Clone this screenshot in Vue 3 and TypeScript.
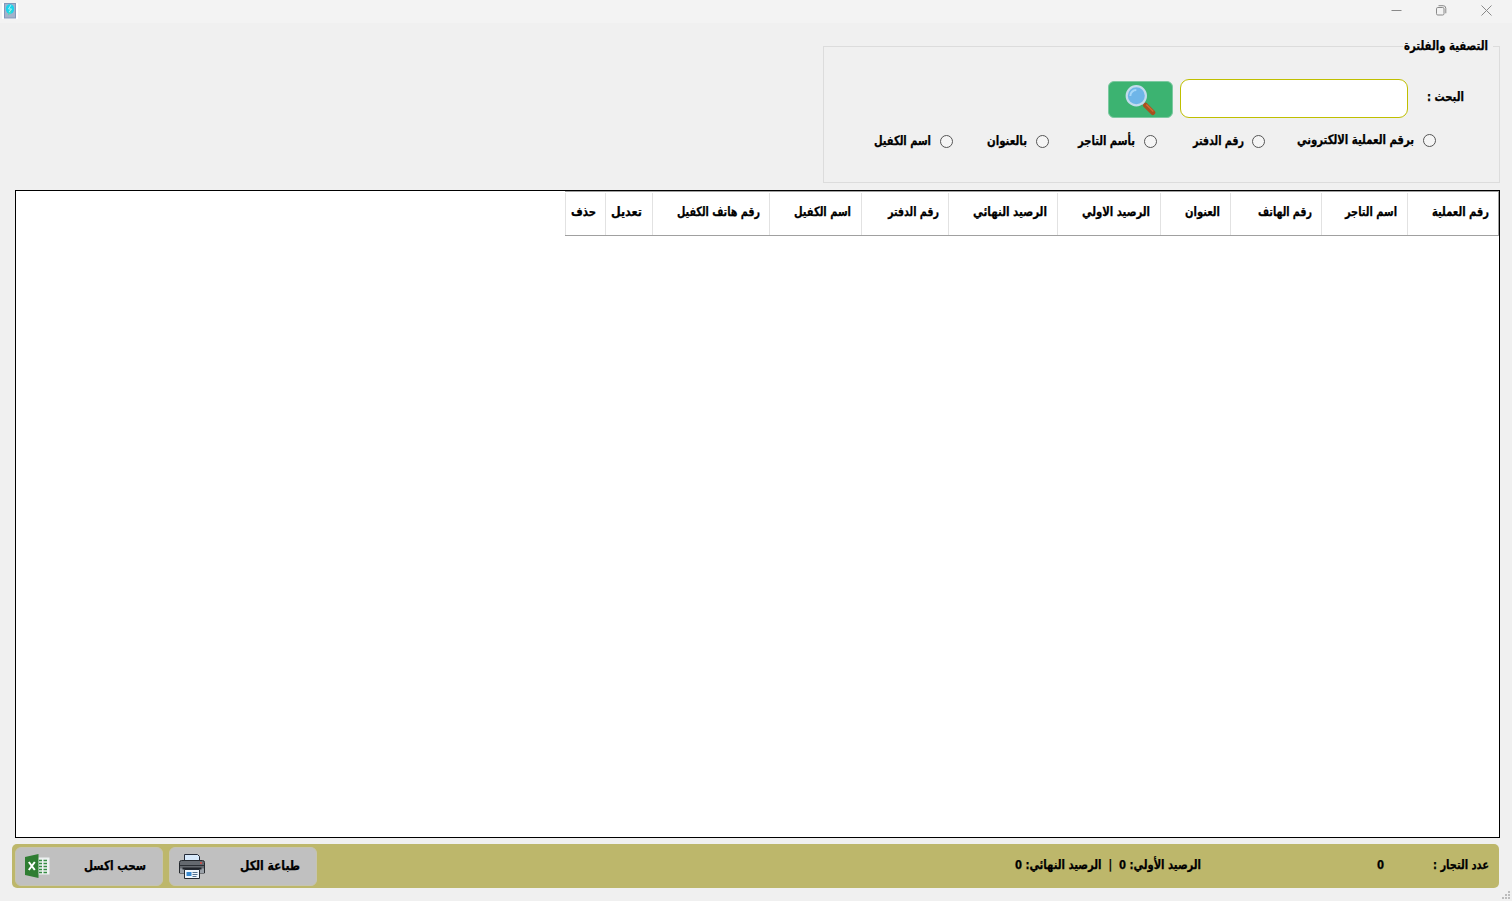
<script setup lang="ts">
import { h, ref } from 'vue'

interface LabelProps { text: string; w: number }

// A caption fitted to a fixed width; its baseline lies 14px below its top.
const Caption = (p: LabelProps) =>
  h('svg', { class: 'caption', width: p.w, height: 20 }, [
    h('text', { x: p.w / 2, y: 14, textLength: p.w, lengthAdjust: 'spacingAndGlyphs' }, p.text),
  ])
Caption.props = ['text', 'w']

const query = ref('')
const filters = [
  { text: 'برقم العملية الالكتروني', w: 117, gap: 0, lift: true },
  { text: 'رقم الدفتر', w: 51, gap: 32, tight: true },
  { text: 'بأسم التاجر', w: 57, gap: 36 },
  { text: 'بالعنوان', w: 40, gap: 29 },
  { text: 'اسم الكفيل', w: 57, gap: 34 },
]
const columns = [
  { text: 'رقم العملية', w: 57, col: 91, pad: 9 },
  { text: 'اسم التاجر', w: 52, col: 86, pad: 10 },
  { text: 'رقم الهاتف', w: 54, col: 91, pad: 9 },
  { text: 'العنوان', w: 35, col: 70, pad: 10 },
  { text: 'الرصيد الاولي', w: 68, col: 103, pad: 10 },
  { text: 'الرصيد النهائي', w: 74, col: 109, pad: 10 },
  { text: 'رقم الدفتر', w: 51, col: 87, pad: 9 },
  { text: 'اسم الكفيل', w: 57, col: 92, pad: 10 },
  { text: 'رقم هاتف الكفيل', w: 83, col: 117, pad: 9 },
  { text: 'تعديل', w: 31, col: 47, pad: 10 },
  { text: 'حذف', w: 25, col: 40, pad: 9 },
]
</script>

<template>
  <div class="window">
    <header class="titlebar">
      <svg class="app-icon" width="16" height="16" viewBox="0 0 16 16">
        <rect width="16" height="16" fill="#fff" />
        <rect x="2.5" y=".5" width="11" height="14.5" fill="#a3b3cb" stroke="#8298bb" />
        <ellipse cx="8" cy="6" rx="4.2" ry="4.8" fill="#19d4ee" />
        <path d="M10 4.5 9 10 6 12.5 7 8.5z" fill="#4be0b8" />
        <path d="M9 2 6.5 6h3L7 9" fill="none" stroke="#a5f4fb" />
      </svg>
      <div class="controls">
        <svg width="11" height="11" viewBox="0 0 11 11"><path d="M.5 5.5h10" /></svg>
        <svg width="11" height="11" viewBox="0 0 11 11">
          <rect x=".5" y="2.5" width="7.5" height="7.5" rx="1.3" />
          <path d="M2.5 .7h4.7a2.6 2.6 0 0 1 2.6 2.6v5" />
        </svg>
        <svg width="11" height="11" viewBox="0 0 11 11"><path d="m.5.5 10 10m0-10-10 10" /></svg>
      </div>
    </header>

    <fieldset class="filter">
      <legend><Caption text="التصفية والفلترة" :w="84" /></legend>
      <div class="search-row">
        <Caption class="search-label" text="البحث :" :w="37" />
        <input v-model="query" class="search-input" type="text" />
        <button class="search-button">
          <svg width="32" height="32" viewBox="0 0 32 32">
            <path d="m19 19 3 3" stroke="#a9c3d0" stroke-width="3" />
            <path d="m21.5 21.2 7.3 7.3" stroke="#a8501f" stroke-width="5" stroke-linecap="round" />
            <path d="m22.3 20.5 7 7" stroke="#cf6d34" stroke-width="1.4" />
            <circle cx="12.3" cy="11.8" r="9.6" fill="#6eb5e8" stroke="#c3dbed" stroke-width="2.2" />
            <path d="M6.3 12a6 6 0 0 1 6-6" fill="none" stroke="#a5d6f8" stroke-width="2" />
          </svg>
        </button>
      </div>
      <div class="radio-row">
        <label
          v-for="f in filters"
          :key="f.text"
          class="radio"
          :class="{ lift: f.lift, tight: f.tight }"
          :style="{ marginRight: f.gap + 'px' }"
        >
          <span class="dot"></span>
          <Caption :text="f.text" :w="f.w" />
        </label>
      </div>
    </fieldset>

    <main class="grid">
      <div class="grid-head">
        <div
          v-for="c in columns"
          :key="c.text"
          class="cell"
          :style="{ width: c.col + 'px', paddingRight: c.pad + 'px' }"
        >
          <Caption :text="c.text" :w="c.w" />
        </div>
      </div>
    </main>

    <footer class="bar">
      <Caption text="عدد التجار :" :w="56" />
      <Caption class="count" text="0" :w="7" />
      <Caption class="totals" text="الرصيد الأولي: 0 &nbsp;|&nbsp; الرصيد النهائي: 0" :w="186" />
      <div class="actions">
        <button class="action print">
          <Caption text="طباعة الكل" :w="60" />
          <svg width="26" height="26" viewBox="0 0 26 26">
            <path d="M5.5 8V1.5h13l2 2V8z" fill="#d7e9fb" stroke="#242b38" />
            <path d="M2.5 7.5h21a2 2 0 0 1 2 2V20h-25V9.5a2 2 0 0 1 2-2z" fill="#64696f" stroke="#25292e" />
            <path d="M1 12.5h24" stroke="#2b2f35" />
            <path d="M1 15.5h24V20H1z" fill="#9ba1a8" />
            <path d="M21 10h2" stroke="#e04b43" stroke-width="1.5" />
            <path d="M3.5 15.5h19" stroke="#20242a" stroke-width="2" />
            <path d="M5.5 16.5h15v9h-15z" fill="#eff6fc" stroke="#252a32" />
            <path d="M7.5 19h5v4h-5z" fill="#3989cf" />
            <path d="M13.5 19.5h5m-5 2h5m-5 2h4" stroke="#53718f" />
          </svg>
        </button>
        <button class="action excel">
          <Caption text="سحب اكسل" :w="62" />
          <svg width="26" height="26" viewBox="0 0 26 26">
            <path d="M13 4.5h12.5v17H13z" fill="#eef2f2" />
            <path d="M15 7.5h3m1.5 0H23m-8 3h3m1.5 0H23m-8 3h3m1.5 0H23m-8 3h3m1.5 0H23m-8 3h3m1.5 0H23" stroke="#348b42" stroke-width="1.7" />
            <path d="M1 4 14.5 1v24L1 22z" fill="#2f7d32" />
            <path d="m4.8 9 6 8m0-8-6 8" stroke="#fff" stroke-width="2" />
          </svg>
        </button>
      </div>
    </footer>
    <svg class="grip" width="9" height="9" viewBox="0 0 9 9">
      <path d="M6 0h2v2H6zM3 3h2v2H3zM6 3h2v2H6zM0 6h2v2H0zM3 6h2v2H3zM6 6h2v2H6z" fill="#bcbcbc" />
    </svg>
  </div>
</template>

<style>
body { margin: 0; overflow: hidden; }
</style>

<style scoped>
.window {
  position: relative;
  box-sizing: border-box;
  width: 1512px;
  height: 901px;
  overflow: hidden;
  background: #f0f0f0;
  direction: rtl;
  font: bold 13px "DejaVu Sans Condensed", "DejaVu Sans", sans-serif;
  color: #000;
}
.caption {
  display: block;
  flex: none;
  overflow: visible;
  fill: currentColor;
  stroke: currentColor;
  stroke-width: 0.25px;
  text-anchor: middle;
  direction: rtl;
}
.titlebar {
  display: flex;
  direction: ltr;
  justify-content: space-between;
  height: 23px;
  background: #f3f3f3;
}
.app-icon { margin: 3px 0 0 2px; }
.controls { display: flex; gap: 34px; margin: 5px 20px 0 0; }
.controls svg { fill: none; stroke: #898989; stroke-width: 1; }
.filter {
  box-sizing: border-box;
  width: 677px;
  height: 147px;
  margin: 13px 12px 0 0;
  padding: 0;
  border: 1px solid #dcdcdc;
  min-width: 0;
}
.filter legend { height: 20px; margin-right: 6px; padding: 0 5px 0 1px; }
.search-row { display: flex; align-items: flex-start; margin: 23px 35px 0 0; height: 39px; }
.search-label { margin-top: 8px; }
.search-input {
  box-sizing: border-box;
  width: 228px;
  height: 39px;
  margin: 0 19px 0 0;
  padding: 0 10px;
  border: 1px solid #bfbf00;
  border-radius: 9px;
  background: #fff;
  outline: none;
}
.search-button {
  width: 65px;
  height: 37px;
  margin: 2px 7px 0 0;
  padding: 2px 16px 1px;
  border: 1px solid #7cc9a0;
  border-radius: 6px;
  background: #3cb371;
  box-sizing: border-box;
}
.search-button svg { display: block; }
.radio-row { display: flex; margin: 13px 63px 0 0; }
.radio { display: flex; gap: 9px; margin-top: 1px; }
.radio.lift { margin-top: 0; }
.radio.tight { gap: 8px; }
.radio .caption { margin-top: -1px; }
.dot {
  box-sizing: border-box;
  flex: none;
  width: 13px;
  height: 13px;
  margin-top: 3px;
  border: 1px solid #555;
  border-radius: 50%;
  background: #f5f5f5;
}
.grid {
  box-sizing: border-box;
  width: 1485px;
  height: 648px;
  margin: 7px 12px 0 0;
  border: 1px solid #000;
  background: #fff;
}
.grid-head {
  display: flex;
  box-sizing: border-box;
  width: 934px;
  height: 45px;
  border: solid #a0a0a0;
  border-width: 1px 1px 1px 0;
}
.cell {
  box-sizing: border-box;
  flex: none;
  height: 42px;
  margin-top: 1px;
  padding: 9px 0 0;
  border-left: 1px solid #e2e2e2;
}
.bar {
  display: flex;
  align-items: center;
  box-sizing: border-box;
  width: 1487px;
  height: 44px;
  margin: 6px 13px 0 0;
  padding: 0 10px 0 3px;
  border-radius: 5px;
  background: #bdb76b;
}
.bar > .caption { margin-bottom: 2px; }
.count { margin-right: 49px; }
.totals { margin-right: 176px; }
.actions { display: flex; gap: 6px; margin-right: auto; }
.action {
  display: flex;
  align-items: center;
  justify-content: space-between;
  box-sizing: border-box;
  width: 148px;
  height: 39px;
  padding: 0 16px 0 9px;
  border: 1px solid #c6c4b0;
  border-radius: 6px;
  background: #c0c0c0;
  color: #000;
  font: inherit;
}
.excel { padding-left: 8px; }
.action .caption { margin-bottom: 1px; }
.grip { position: absolute; left: 1502px; top: 891px; }
</style>
